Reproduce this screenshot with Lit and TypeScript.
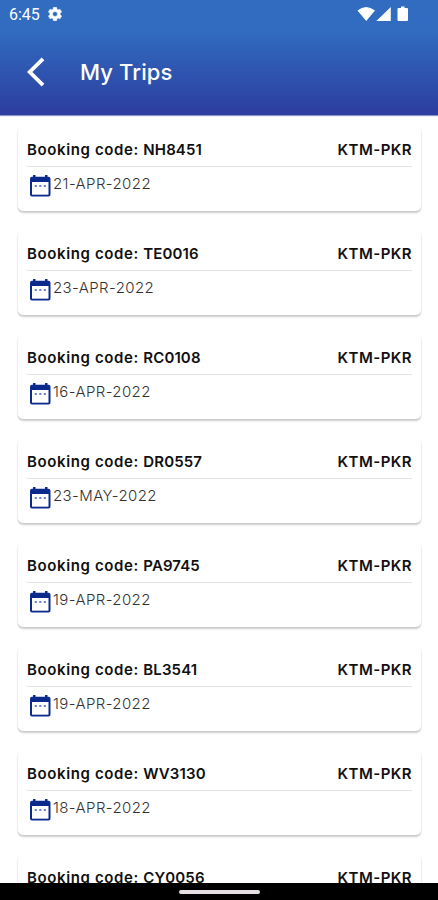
import { LitElement, html, css } from "lit";
import { customElement, property } from "lit/decorators.js";

interface Trip {
  code: string;
  date: string;
  route: string;
}

const trips: Trip[] = [
  { code: "NH8451", date: "21-APR-2022", route: "KTM-PKR" },
  { code: "TE0016", date: "23-APR-2022", route: "KTM-PKR" },
  { code: "RC0108", date: "16-APR-2022", route: "KTM-PKR" },
  { code: "DR0557", date: "23-MAY-2022", route: "KTM-PKR" },
  { code: "PA9745", date: "19-APR-2022", route: "KTM-PKR" },
  { code: "BL3541", date: "19-APR-2022", route: "KTM-PKR" },
  { code: "WV3130", date: "18-APR-2022", route: "KTM-PKR" },
  { code: "CY0056", date: "18-APR-2022", route: "KTM-PKR" },
];

@customElement("trip-card")
export class TripCard extends LitElement {
  @property({ attribute: false }) trip!: Trip;

  static styles = css`
    :host {
      display: block;
      box-sizing: border-box;
      flex: none;
      height: 84px;
      padding: 0 9px;
      border-radius: 5px;
      background: #fff;
      box-shadow: 0 2px 2px rgba(0, 0, 0, 0.2), 0 0 2px rgba(0, 0, 0, 0.07);
      clip-path: inset(0 -4px -6px -4px);
    }
    .top {
      display: flex;
      justify-content: space-between;
      align-items: center;
      box-sizing: border-box;
      height: 40px;
      padding-top: 7px;
      border-bottom: 1.5px solid #e3e3e3;
      font-size: 15px;
      font-weight: 600;
      line-height: 20px;
      color: #101010;
      white-space: nowrap;
    }
    .label {
      letter-spacing: 0.62px;
    }
    .code {
      letter-spacing: 0.12px;
    }
    .route {
      letter-spacing: 0.45px;
    }
    .bottom {
      display: flex;
      align-items: center;
      height: 36px;
      padding-left: 3px;
      font-size: 15px;
      font-weight: 300;
      color: #333;
      letter-spacing: 0.4px;
    }
    .date {
      line-height: 20px;
      margin-bottom: 2px;
    }
    .calendar {
      display: block;
      width: 21px;
      height: 22px;
      margin: 2px 2px 0 0;
    }
  `;

  render() {
    return html`
      <div class="top">
        <span><span class="label">Booking code: </span><span class="code">${this.trip.code}</span></span>
        <span class="route">${this.trip.route}</span>
      </div>
      <div class="bottom">
        <svg class="calendar" viewBox="0 0 21 22">
          <path fill="#0b2a8c" d="M3 0h2.500v1.700h9.500V0h2.500v1.700h1a2 2 0 0 1 2 2v15.800a2 2 0 0 1-2 2h-16.500a2 2 0 0 1-2-2V3.700a2 2 0 0 1 2-2h1z" />
          <path fill="#fff" d="M2 7h16.500v12.700H2z" />
          <path fill="#6a7fbb" d="M4.800 10h2v2h-2zM9.300 10h2v2h-2zM13.800 10h2v2h-2z" />
        </svg>
        <span class="date">${this.trip.date}</span>
      </div>
    `;
  }
}

@customElement("app-root")
export class AppRoot extends LitElement {
  static styles = css`
    :host {
      display: flex;
      flex-direction: column;
      height: 900px;
      overflow: hidden;
      background: #fff;
      font-family: Inter, "Liberation Sans", sans-serif;
    }
    header {
      flex: none;
      height: 115px;
      color: #fff;
      background: linear-gradient(#316cc0 0, #316cc0 30px, #2c3d9e 115px);
      box-shadow: 0 1px 1px #8b95c6;
    }
    .status {
      display: flex;
      align-items: center;
      height: 29px;
      padding: 0 30px 0 9px;
      font: 16px Roboto, sans-serif;
    }
    .gear {
      width: 14px;
      height: 14px;
      margin-left: 8px;
      margin-bottom: 1px;
    }
    .signals {
      width: 51px;
      height: 16px;
      margin: 0 0 1px auto;
    }
    .bar {
      display: flex;
      align-items: center;
      height: 86px;
    }
    .back {
      width: 20px;
      height: 30px;
      margin-left: 26px;
    }
    h1 {
      margin: 0 0 0 34px;
      font-size: 22px;
      font-weight: 500;
      line-height: 30px;
      letter-spacing: 0.1px;
    }
    main {
      display: flex;
      flex: 1;
      min-height: 0;
      flex-direction: column;
      gap: 20px;
      box-sizing: border-box;
      padding: 12px 17px 0 18px;
      overflow: hidden;
    }
    nav {
      display: flex;
      flex: none;
      justify-content: center;
      height: 17px;
      background: #000;
    }
    .handle {
      width: 81px;
      height: 4px;
      margin-top: 7px;
      border-radius: 2px;
      background: #e6e0e4;
    }
  `;

  render() {
    return html`
      <header>
        <div class="status">
          <span>6:45</span>
          <svg class="gear" viewBox="2 2 20 20">
            <path fill="#fff" stroke="#fff" stroke-width=".8" d="M19.140 12.940c.04-.3.06-.61.06-.94s-.02-.64-.07-.94l2.030-1.580a.49.49 0 0 0 .12-.61l-1.920-3.320a.49.49 0 0 0-.59-.22l-2.390.96a7 7 0 0 0-1.620-.94l-.36-2.540a.48.48 0 0 0-.48-.41h-3.840a.48.48 0 0 0-.47.41l-.36 2.540a7.300 7.300 0 0 0-1.620.94l-2.390-.96a.48.48 0 0 0-.59.22L2.740 8.870a.48.48 0 0 0 .12.61l2.030 1.580a6 6 0 0 0 0 1.880l-2.030 1.580a.49.49 0 0 0-.12.61l1.920 3.320c.12.22.37.29.59.22l2.390-.96c.5.38 1.030.7 1.620.94l.36 2.540c.05.24.24.41.48.41h3.840c.24 0 .44-.17.47-.41l.36-2.540a7 7 0 0 0 1.620-.94l2.390.96c.22.08.47 0 .59-.22l1.920-3.320a.48.48 0 0 0-.12-.61zM12 15.600a3.600 3.600 0 1 1 0-7.200 3.600 3.600 0 0 1 0 7.200z" />
          </svg>
          <svg class="signals" viewBox="0 0 51 16">
            <path fill="#fff" d="M.5 4.500Q9-2.500 18 4.500L9.200 15zM19.300 15 33.800 1v14zM41.500 2H44V.5h3.500V2H50q1 0 1 1v11q0 1-1 1h-8.500q-1 0-1-1V3q0-1 1-1z" />
          </svg>
        </div>
        <div class="bar">
          <svg class="back" viewBox="0 0 20 30">
            <path fill="none" stroke="#fff" stroke-width="3.800" d="M17 1.800 3.700 15 17 28.200" />
          </svg>
          <h1>My Trips</h1>
        </div>
      </header>
      <main>${trips.map((trip) => html`<trip-card .trip=${trip}></trip-card>`)}</main>
      <nav><div class="handle"></div></nav>
    `;
  }
}
